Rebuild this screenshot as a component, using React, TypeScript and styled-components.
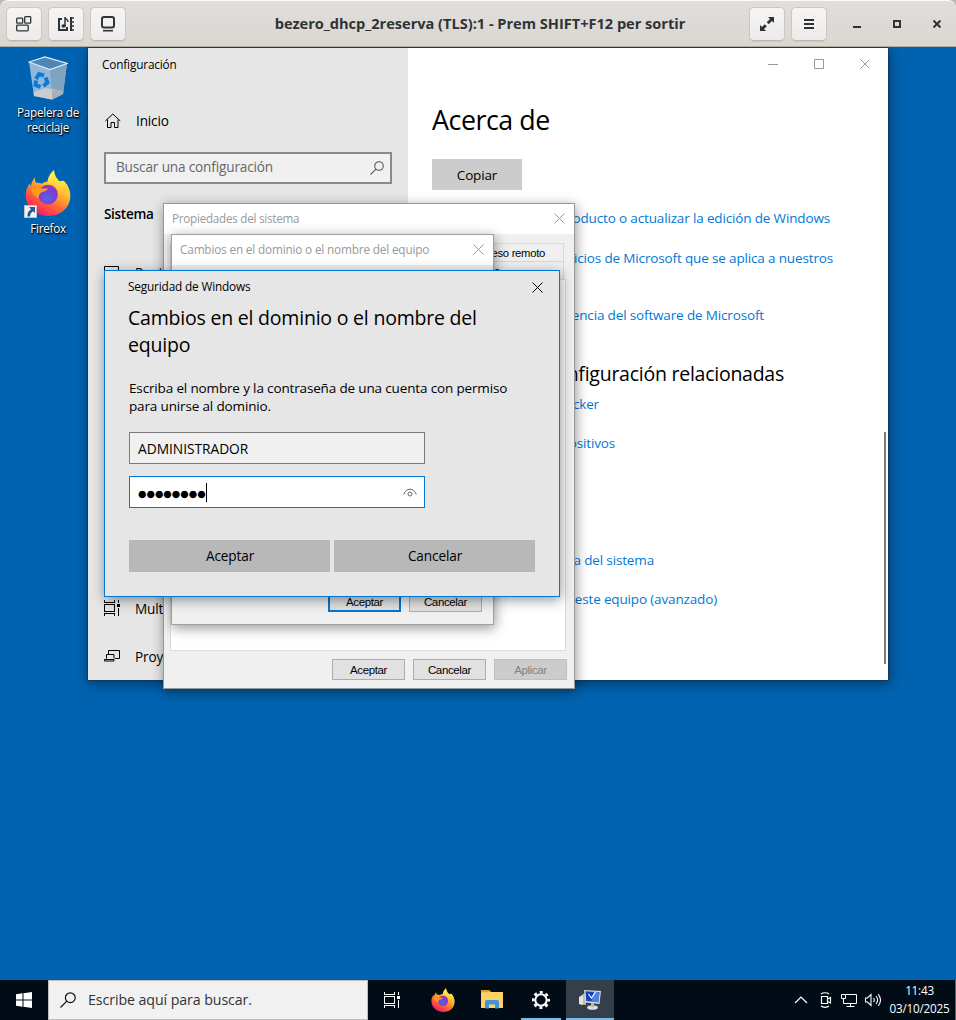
import React from "react";
import styled, { createGlobalStyle, css } from "styled-components";

const Global = createGlobalStyle`
  * { box-sizing: border-box; }
  body { margin: 0; background: #b9b9b9; font-family: "Open Sans", "Noto Sans", sans-serif; color: #000; overflow: hidden; }
`;

const Screen = styled.div`
  width: 956px;
  height: 1020px;
  display: flex;
  flex-direction: column;
  overflow: hidden;
`;

/* ---- text ---- */
const Label = styled.span<{ $size?: number; $track?: number; $color?: string; $bold?: boolean; $line?: number }>`
  font-size: ${(p) => p.$size ?? 13.6}px;
  letter-spacing: ${(p) => p.$track ?? -0.16}px;
  color: ${(p) => p.$color ?? "#000"};
  font-weight: ${(p) => (p.$bold ? 600 : 400)};
  line-height: ${(p) => p.$line ?? 20}px;
  white-space: nowrap;
`;

/* ---- viewer header ---- */
const Header = styled.header`
  height: 47px;
  flex: none;
  display: flex;
  align-items: center;
  justify-content: space-between;
  padding: 0 6px;
  border-radius: 8px 8px 0 0;
  border-top: 1px solid #fafafa;
  border-bottom: 1px solid #b3aca3;
  background: linear-gradient(#e1dedb, #dad6d2);
`;
const HeaderGroup = styled.div<{ $end?: boolean }>`
  width: 207px;
  display: flex;
  gap: 6px;
  align-items: center;
  justify-content: ${(p) => (p.$end ? "flex-end" : "flex-start")};
`;
const HeaderButton = styled.button`
  width: 36px;
  height: 34px;
  padding: 0;
  display: grid;
  place-items: center;
  border: 1px solid #cdc7c2;
  border-bottom-color: #bfb8b1;
  border-radius: 5px;
  background: linear-gradient(#f6f5f4, #edebe9);
  box-shadow: 0 1px 1px rgba(0, 0, 0, 0.07);
`;
const HeaderTitle = styled.h1`
  margin: 0;
  padding: 0 0 2px 4px;
  flex: 1;
  text-align: center;
  font-size: 14.6px;
  line-height: 20px;
  font-weight: 700;
  letter-spacing: -0.02px;
  color: #2e3436;
  white-space: nowrap;
`;
const WindowControl = styled.span`
  width: 40px;
  display: grid;
  place-items: center;
`;
const Controls = styled.div`
  display: flex;
  margin: 0 -7px 0 4px;
`;

/* ---- desktop ---- */
const Desktop = styled.main`
  position: relative;
  flex: 1;
  background: #0063b1;
  overflow: hidden;
`;
const Shortcuts = styled.div`
  width: 96px;
  display: flex;
  flex-direction: column;
`;
const Shortcut = styled.div<{ $top: number }>`
  padding-top: ${(p) => p.$top}px;
  display: flex;
  flex-direction: column;
  align-items: center;
  gap: 5px;
  text-align: center;
  font-size: 11.7px;
  line-height: 15px;
  letter-spacing: -0.25px;
  color: #fff;
  text-shadow: 1px 1px 2px #000, 0 1px 1px #000;
`;
const Win = styled.section<{ $x: number; $y: number; $w: number; $h: number; $edge: string }>`
  position: absolute;
  left: ${(p) => p.$x}px;
  top: ${(p) => p.$y}px;
  width: ${(p) => p.$w}px;
  height: ${(p) => p.$h}px;
  border: 1px solid ${(p) => p.$edge};
  background-clip: padding-box;
  box-shadow: 1px 3px 12px rgba(0, 0, 0, 0.42);
  overflow: hidden;
`;

const SettingsWin = styled(Win)`
  display: flex;
  background-color: #fff;
`;
const Sidebar = styled.aside`
  width: 320px;
  background: #e6e6e6;
  display: flex;
  flex-direction: column;
  > * { flex: none; }
`;
const SideTitle = styled.div`
  padding: 5px 14px 0;
  height: 57px;
  line-height: 20px;
`;
const NavRow = styled.div<{ $gap?: number; $drop?: boolean }>`
  height: 32px;
  margin-top: ${(p) => p.$gap ?? 0}px;
  margin-bottom: 16px;
  padding-left: 16px;
  display: flex;
  align-items: center;
  gap: 15px;
  svg { flex: none; }
  ${Label} { padding-top: ${(p) => (p.$drop ? 2 : 0)}px; }
`;
const SearchField = styled.div`
  height: 32px;
  margin: -1px 16px 0;
  padding: 0 6px 1px 10px;
  border: 2px solid #8a8a8a;
  background: #f0f0f0;
  display: flex;
  align-items: center;
  justify-content: space-between;
  ${Label} { padding-bottom: 2px; }
`;
const SectionName = styled.div`
  padding: 18px 16px 0;
  height: 73px;
`;
const Content = styled.div`
  flex: 1;
  position: relative;
  display: flex;
  flex-direction: column;
  align-items: flex-start;
  padding-left: 24px;
`;
const Caption = styled.div`
  align-self: stretch;
  height: 32px;
  display: flex;
  justify-content: flex-end;
  align-items: center;
  gap: 36px;
  padding-right: 18px;
`;
const PageTitle = styled.h2`
  margin: 21px 0 0;
  height: 58px;
  font-size: 26.8px;
  font-weight: 400;
  line-height: 38px;
  letter-spacing: -0.45px;
`;
const CopyButton = styled.button`
  width: 90px;
  height: 31px;
  padding: 1px 0 0;
  border: 0;
  background: #ccc;
  font: 13.5px/20px "Open Sans", sans-serif;
  letter-spacing: -0.16px;
`;
const LinkRow = styled.a<{ $w: number; $gap: number }>`
  width: ${(p) => p.$w}px;
  margin-top: ${(p) => p.$gap}px;
  display: flex;
  justify-content: flex-end;
  color: #0078d7;
  font-size: 13.5px;
  line-height: 20px;
  letter-spacing: -0.15px;
  white-space: nowrap;
`;
const RelatedTitle = styled.h3`
  margin: 35px 0 0;
  width: 352px;
  display: flex;
  justify-content: flex-end;
  font-size: 19.5px;
  letter-spacing: -0.25px;
  font-weight: 400;
  line-height: 28px;
  white-space: nowrap;
`;
const ScrollThumb = styled.div`
  position: absolute;
  right: 2px;
  top: 384px;
  width: 2px;
  height: 232px;
  background: #7a7a7a;
`;

/* ---- classic dialogs ---- */
const ClassicWin = styled(Win)`
  background-color: #f0f0f0;
  display: flex;
  flex-direction: column;
`;
const ClassicTitle = styled.div`
  flex: none;
  height: 30px;
  padding: 0 9px 2px 8px;
  background: #fff;
  display: flex;
  align-items: center;
  justify-content: space-between;
  ${Label} { padding-bottom: 1px; }
`;
const TabArea = styled.div`
  margin: 9px 10px 0 6px;
  display: flex;
  flex-direction: column;
`;
const TabRow = styled.div<{ $pad: number }>`
  height: 18px;
  padding-right: ${(p) => p.$pad}px;
  border: 1px solid #d9d9d9;
  border-bottom: 0;
  display: flex;
  justify-content: flex-end;
  align-items: center;
  font: 11.3px/14px "Liberation Sans", Arial, sans-serif;
  letter-spacing: -0.3px;
`;
const TabPage = styled.div`
  height: 372px;
  margin: 0 8px 0 6px;
  border: 1px solid #dcdcdc;
  background: #fff;
`;
const ButtonBar = styled.div<{ $pad: number; $pushed?: boolean }>`
  margin-top: ${(p) => (p.$pushed ? "auto" : "8px")};
  padding: 0 ${(p) => p.$pad}px ${(p) => (p.$pushed ? 12 : 0)}px;
  display: flex;
  justify-content: flex-end;
  gap: 8px;
`;
const ClassicButton = styled.button<{ $primary?: boolean; $off?: boolean }>`
  width: 73px;
  height: 21px;
  padding: 0;
  border: 1px solid #adadad;
  background: #e1e1e1;
  font: 11.5px/14px "Liberation Sans", Arial, sans-serif;
  letter-spacing: -0.35px;
  color: #000;
  ${(p) => p.$primary && css`border: 2px solid #0078d7;`}
  ${(p) => p.$off && css`background: #ccc; border-color: #bfbfbf; color: #838383;`}
`;

/* ---- credential dialog ---- */
const Credential = styled(Win)`
  background-color: #e6e6e6;
  padding: 6px 24px 0 23px;
  display: flex;
  flex-direction: column;
`;
const CredTitle = styled.div`
  display: flex;
  align-items: center;
  justify-content: space-between;
  height: 20px;
  margin-right: -8px;
  ${Label} { padding-bottom: 2px; }
`;
const CredHeading = styled.h2`
  margin: 7px 0 0;
  font-size: 19.5px;
  font-weight: 400;
  line-height: 27px;
  letter-spacing: -0.21px;
  white-space: pre-line;
`;
const CredText = styled.p`
  margin: 21px 0 0 1px;
  font-size: 13.5px;
  line-height: 18px;
  letter-spacing: -0.15px;
  white-space: pre-line;
`;
const Field = styled.div<{ $focus?: boolean }>`
  width: 296px;
  height: 32px;
  margin: ${(p) => (p.$focus ? 12 : 17)}px 0 0 1px;
  padding: 2px 7px 0 8px;
  border: 1px solid ${(p) => (p.$focus ? "#0078d7" : "#7a7a7a")};
  background: ${(p) => (p.$focus ? "#fff" : "#f0f0f0")};
  display: flex;
  align-items: center;
`;
const Dots = styled.span`
  padding-top: 2px;
  font: 9.7px/20px "DejaVu Sans", sans-serif;
`;
const Caret = styled.span`
  width: 1px;
  height: 19px;
  background: #000;
  margin: -1px auto 0 0;
`;
const CredButtons = styled.div`
  display: flex;
  gap: 4px;
  margin: 32px 0 0 1px;
`;
const CredButton = styled.button`
  width: 201px;
  height: 32px;
  padding: 0 0 0 1px;
  border: 0;
  background: #b8b8b8;
  font: 13.6px/20px "Open Sans", sans-serif;
  letter-spacing: -0.12px;
`;

/* ---- taskbar ---- */
const Taskbar = styled.footer`
  flex: none;
  height: 40px;
  display: flex;
  background: #010c17;
`;
const StartButton = styled.div`
  width: 48px;
  display: grid;
  place-items: center;
`;
const TaskSearch = styled.div`
  width: 320px;
  border: 1px solid #bdbdbd;
  background: #f1f1f1;
  display: flex;
  align-items: center;
  gap: 12px;
  padding: 0 0 0 11px;
`;
const TaskItem = styled.div<{ $w?: number; $active?: boolean; $line?: boolean }>`
  width: ${(p) => p.$w ?? 49}px;
  height: 40px;
  padding-top: 1px;
  display: flex;
  align-items: center;
  justify-content: center;
  background: ${(p) => (p.$active ? "#343f49" : "transparent")};
  border-bottom: 2px solid ${(p) => (p.$line ? "#76b9ed" : "transparent")};
  background-clip: padding-box;
`;
const Tray = styled.div`
  margin-left: auto;
  display: flex;
  align-items: center;
  border-right: 1px solid #59616a;
`;
const Clock = styled.div`
  width: 71px;
  margin-left: 2px;
  padding-bottom: 2px;
  display: flex;
  flex-direction: column;
  align-items: center;
`;

/* ---- drawings ---- */
const Cross = ({ size = 11, color = "#999", w = 1 }: { size?: number; color?: string; w?: number }) => (
  <svg width={size} height={size} viewBox={`0 0 ${size} ${size}`} stroke={color} strokeWidth={w}>
    <path d={`M.5 .5 ${size - 0.5} ${size - 0.5}M${size - 0.5} .5 .5 ${size - 0.5}`} />
  </svg>
);

const Magnifier = ({ size, color }: { size: number; color: string }) => (
  <svg width={size} height={size} viewBox="0 0 16 16" fill="none" stroke={color} strokeWidth="1.2">
    <circle cx="10.3" cy="5.7" r="4.9" />
    <path d="M6.8 9.2.5 15.5" />
  </svg>
);

const FirefoxIcon = ({ size, id }: { size: number; id: string }) => (
  <svg width={size} height={size} viewBox="0 0 46 46">
    <defs>
      <linearGradient id={id + "a"} x1=".85" y1=".1" x2=".25" y2=".95">
        <stop offset="0" stopColor="#fff44f" />
        <stop offset=".3" stopColor="#ffb52e" />
        <stop offset=".6" stopColor="#ff6a35" />
        <stop offset=".85" stopColor="#ff3750" />
        <stop offset="1" stopColor="#e31587" />
      </linearGradient>
      <radialGradient id={id + "b"} cx=".45" cy=".7" r=".7">
        <stop offset="0" stopColor="#5b63e8" />
        <stop offset=".6" stopColor="#7440d8" />
        <stop offset="1" stopColor="#a233b4" />
      </radialGradient>
      <linearGradient id={id + "c"} x1="0" y1="0" x2="0" y2="1">
        <stop offset="0" stopColor="#fff44f" />
        <stop offset=".55" stopColor="#ffd23a" />
        <stop offset="1" stopColor="#ff8a2d" />
      </linearGradient>
    </defs>
    <path d="M10 7.500c-.3 2.400.2 4 1.200 5.300 2-.3 4 0 5.800 1 3-3 8-3 11.500-1l9-2c5.500 4 8 9.500 7.800 15.500C45 38 35.500 46 23.200 46S.8 37 .8 25.500c0-5 1.500-9.500 4-12 .2 1 .5 1.800.9 2.400.8-3.400 2.200-6.200 4.300-8.400z" fill={`url(#${id}a)`} />
    <circle cx="23" cy="24.500" r="9.800" fill={`url(#${id}b)`} />
    <path d="M29 0c-4 3.500-6.500 8-6.500 12.500 4.500.5 8.500 2 10.500 5.500 2.500 5 1 11-3.500 14.500 7-1 11.500-6 11.500-12.500 1.200 1.500 2 3.500 2.200 5.500C45 19 42.500 14 38.500 10.500 37.800 12 37.500 13 37.600 14 33 10 29.500 6.500 29 0z" fill={`url(#${id}c)`} />
    <path d="M5.500 19c3-2.500 7.500-2.500 11-.5h6.300c-.2 2.500-4.500 3-6.300 3.800-1.700.8-3 3.700-3 5.700C9.500 26 6 23 5.500 19z" fill="#ff9a1f" />
  </svg>
);

const RecycleBin = () => (
  <svg width="40" height="44" viewBox="0 0 40 44">
    <path d="M1 6 6 40l18 3.500 11-5.500L39 7.500 20 13z" fill="#a3c0da" opacity=".9" />
    <path d="M22 13.500 39 7.500 35 38l-11 5.500z" fill="#7fa3c3" />
    <path d="M1 6 17 1l22 6.500L22 13.500z" fill="#4f86b5" stroke="#dcebf6" strokeWidth="1.300" />
    <path d="m5.500 36 12-4 17 3-.5 3.200L24 43.500 6 40z" fill="#c9cdd0" />
    <path d="M24 43.500 35 38l.4-3-11.400-3z" fill="#a8afb5" />
    <g fill="none" stroke="#0a7bdc" strokeWidth="4">
      <path d="m8 23 3-5 5 1.500M17.500 21.500l2 5-4 3.500M12.500 31l-5-2 .5-4.500" />
    </g>
  </svg>
);

const FirefoxShortcut = styled.div`
  position: relative;
  height: 46px;
`;
const ShortcutArrow = styled.svg`
  position: absolute;
  left: -1px;
  bottom: -2px;
`;

const TaskView = ({ color }: { color: string }) => (
  <svg width="16" height="16" viewBox="0 0 16 16" fill="none" stroke={color} shapeRendering="crispEdges">
    <path d="M.5 0v2.500h10V0M.5 16v-2.500h10V16M.5 4.500h10v7H.5zM14.500 0v3M14.500 8v8" />
    <path d="M13 4h3v3h-3z" fill={color} stroke="none" />
  </svg>
);

export default function App() {
  return (
    <Screen>
      <Global />
      <Header>
        <HeaderGroup>
          <HeaderButton>
            <svg width="16" height="16" viewBox="0 0 16 16" fill="none" stroke="#2e3436" strokeWidth="1.300">
              <rect x=".7" y="2.200" width="6" height="5" rx=".8" />
              <rect x="8.700" y=".7" width="6" height="6.500" rx=".8" />
              <rect x=".7" y="9.200" width="11.500" height="5.600" rx=".8" />
            </svg>
          </HeaderButton>
          <HeaderButton>
            <svg width="18" height="16" viewBox="0 0 18 16" fill="none" stroke="#2e3436" strokeWidth="2">
              <path d="M5 3H2v11h8v-3" />
              <path d="M8 1v9M8 1.500c1 2 3 2 3 4.500" strokeWidth="1.500" />
              <ellipse cx="6.600" cy="10" rx="2.200" ry="1.800" fill="#2e3436" stroke="none" />
              <path d="M14 1v14" />
              <path d="M14 2h3M14 6h3M14 10h3M14 14h3" strokeWidth="1.500" />
            </svg>
          </HeaderButton>
          <HeaderButton>
            <svg width="16" height="16" viewBox="0 0 16 16" fill="none" stroke="#2e3436" strokeWidth="2">
              <rect x="2" y="1" width="12" height="10.500" rx="2" />
              <path d="M3 14.700h10" strokeWidth="1.600" />
            </svg>
          </HeaderButton>
        </HeaderGroup>
        <HeaderTitle>bezero_dhcp_2reserva (TLS):1 - Prem SHIFT+F12 per sortir</HeaderTitle>
        <HeaderGroup $end>
          <HeaderButton>
            <svg width="14" height="14" viewBox="0 0 14 14" fill="#2e3436">
              <path d="M8 0h6v6l-2-2-3.300 3.300L6.700 5.300 10 2zM6 14H0V8l2 2 2.800-2.800 2 2L4 12z" />
            </svg>
          </HeaderButton>
          <HeaderButton>
            <svg width="12" height="12" viewBox="0 0 12 12" fill="#2e3436" shapeRendering="crispEdges">
              <path d="M1 1h10v2H1zM1 5h10v2H1zM1 9h10v2H1z" />
            </svg>
          </HeaderButton>
          <Controls>
            <WindowControl>
              <svg width="8" height="10" viewBox="0 0 8 10"><path d="M0 7h8v2H0z" fill="#2e3436" /></svg>
            </WindowControl>
            <WindowControl>
              <svg width="8" height="8" viewBox="0 0 8 8"><path d="M1 1h6v6H1z" fill="none" stroke="#2e3436" strokeWidth="2" /></svg>
            </WindowControl>
            <WindowControl>
              <Cross size={8} color="#2e3436" w={2} />
            </WindowControl>
          </Controls>
        </HeaderGroup>
      </Header>

      <Desktop>
        <Shortcuts>
          <Shortcut $top={9}>
            <RecycleBin />
            <span>Papelera de<br />reciclaje</span>
          </Shortcut>
          <Shortcut $top={35}>
            <FirefoxShortcut>
              <FirefoxIcon size={46} id="desk" />
              <ShortcutArrow width="13" height="13" viewBox="0 0 13 13">
                <path d="M.5.5h12v12H.5z" fill="#f4f4f4" stroke="#c4c4c4" />
                <path d="M5 2h6v6L9 6.200C7 7.500 6.300 9 6 11.500H3.500C3 8.500 4.500 5.800 7 4.200z" fill="#2b5797" />
              </ShortcutArrow>
            </FirefoxShortcut>
            <span>Firefox</span>
          </Shortcut>
        </Shortcuts>

        <SettingsWin $x={87} $y={0} $w={802} $h={634} $edge="rgba(20,50,80,.65)">
          <Sidebar>
            <SideTitle><Label $size={11.8}>Configuración</Label></SideTitle>
            <NavRow>
              <svg width="17" height="16" viewBox="0 0 17 16" fill="none" stroke="#000">
                <path d="M1.300 8 8.800 1l7.500 7M3.500 6.500v8h3.500v-5h3.500v5H14v-8" />
              </svg>
              <Label>Inicio</Label>
            </NavRow>
            <SearchField>
              <Label $color="#666">Buscar una configuración</Label>
              <Magnifier size={14} color="#555" />
            </SearchField>
            <SectionName><Label $bold $size={13.5} $track={-0.3}>Sistema</Label></SectionName>
            <NavRow>
              <svg width="16" height="16" viewBox="0 0 16 16" fill="none" stroke="#000">
                <path d="M.5 1.500h14v10H.5zM4 14.500h7" />
              </svg>
              <Label>Pantalla</Label>
            </NavRow>
            <NavRow $gap={287} $drop>
              <TaskView color="#000" />
              <Label>Multitarea</Label>
            </NavRow>
            <NavRow $drop>
              <svg width="16" height="16" viewBox="0 0 16 16" fill="none" stroke="#000">
                <path d="M4.500 6V2.500h11v8H11M2.500 10.500v-4H10v4M.5 11.500h9.500v1.500H.5z" />
              </svg>
              <Label>Proyectar</Label>
            </NavRow>
          </Sidebar>
          <Content>
            <Caption>
              <svg width="10" height="10"><path d="M0 5.500h10" stroke="#999" /></svg>
              <svg width="10" height="10"><path d="M.5.500h9v9h-9z" fill="none" stroke="#999" /></svg>
              <Cross size={10} />
            </Caption>
            <PageTitle>Acerca de</PageTitle>
            <CopyButton>Copiar</CopyButton>
            <LinkRow $w={398} $gap={18}>Cambiar la clave de producto o actualizar la edición de Windows</LinkRow>
            <LinkRow $w={401} $gap={20}>Lea el Contrato de servicios de Microsoft que se aplica a nuestros</LinkRow>
            <LinkRow $w={332} $gap={37}>Lea los Términos de licencia del software de Microsoft</LinkRow>
            <RelatedTitle>Opciones de configuración relacionadas</RelatedTitle>
            <LinkRow $w={167} $gap={6}>Configuración de BitLocker</LinkRow>
            <LinkRow $w={183} $gap={19}>Administrador de dispositivos</LinkRow>
            <LinkRow $w={222} $gap={97}>Configuración avanzada del sistema</LinkRow>
            <LinkRow $w={285} $gap={19}>Cambiar el nombre de este equipo (avanzado)</LinkRow>
            <ScrollThumb />
          </Content>
        </SettingsWin>

        <ClassicWin $x={163} $y={156} $w={412} $h={486} $edge="#989898">
          <ClassicTitle>
            <Label $size={11.7} $track={-0.26} $color="#999">Propiedades del sistema</Label>
            <Cross />
          </ClassicTitle>
          <TabArea>
            <TabRow $pad={18}>Acceso remoto</TabRow>
            <TabRow $pad={63}>Hardware</TabRow>
          </TabArea>
          <TabPage />
          <ButtonBar $pad={7}>
            <ClassicButton>Aceptar</ClassicButton>
            <ClassicButton>Cancelar</ClassicButton>
            <ClassicButton $off>Aplicar</ClassicButton>
          </ButtonBar>
        </ClassicWin>

        <ClassicWin $x={171} $y={187} $w={323} $h={391} $edge="#a0a0a0">
          <ClassicTitle>
            <Label $size={11.8} $track={-0.18} $color="#999">Cambios en el dominio o el nombre del equipo</Label>
            <Cross />
          </ClassicTitle>
          <ButtonBar $pad={11} $pushed>
            <ClassicButton $primary>Aceptar</ClassicButton>
            <ClassicButton>Cancelar</ClassicButton>
          </ButtonBar>
        </ClassicWin>

        <Credential $x={104} $y={223} $w={456} $h={327} $edge="#0078d7">
          <CredTitle>
            <Label $size={11.8}>Seguridad de Windows</Label>
            <Cross color="#000" />
          </CredTitle>
          <CredHeading>{"Cambios en el dominio o el nombre del\nequipo"}</CredHeading>
          <CredText>{"Escriba el nombre y la contraseña de una cuenta con permiso\npara unirse al dominio."}</CredText>
          <Field><Label $size={13.8} $track={-0.05}>ADMINISTRADOR</Label></Field>
          <Field $focus>
            <Dots>●●●●●●●●</Dots>
            <Caret />
            <svg width="14" height="10" viewBox="0 0 14 10" fill="none" stroke="#666">
              <path d="M.7 6.500C2 3 4.300 1.200 7 1.200S12 3 13.300 6.500" />
              <circle cx="7" cy="6" r="2" />
            </svg>
          </Field>
          <CredButtons>
            <CredButton>Aceptar</CredButton>
            <CredButton>Cancelar</CredButton>
          </CredButtons>
        </Credential>
      </Desktop>

      <Taskbar>
        <StartButton>
          <svg width="16" height="16" viewBox="0 0 16 16" fill="#fff">
            <path d="M0 2.200 6.500 1.300v6.200H0zM7.500 1.200 16 0v7.500H7.500zM0 8.500h6.500v6.200L0 13.800zM7.500 8.500H16V16l-8.500-1.200z" />
          </svg>
        </StartButton>
        <TaskSearch>
          <Magnifier size={16} color="#111" />
          <Label $size={14.2} $track={-0.08} $color="#333">Escribe aquí para buscar.</Label>
        </TaskSearch>
        <TaskItem $w={48}><TaskView color="#fff" /></TaskItem>
        <TaskItem $w={53}><FirefoxIcon size={24} id="bar" /></TaskItem>
        <TaskItem $w={45}>
          <svg width="22" height="19" viewBox="0 0 22 19">
            <path d="M0 0h8l2 2h12v16H0z" fill="#ffd268" />
            <path d="M0 0h8l1.500 2.300H0z" fill="#e0a51d" />
            <path d="M4 18.500v-6.500c0-1.500.8-2 2-2h10c1.200 0 2 .5 2 2v6.500h-4v-4H8v4z" fill="#3f95d8" />
          </svg>
        </TaskItem>
        <TaskItem $w={7} />
        <TaskItem $w={40} $line>
          <svg width="20" height="20" viewBox="0 0 20 20" fill="none" stroke="#fff">
            <circle cx="10" cy="10" r="5.700" strokeWidth="2" />
            <circle cx="10" cy="10" r="7.700" strokeWidth="2.600" strokeDasharray="3.024 3.024" strokeDashoffset="1.512" />
          </svg>
        </TaskItem>
        <TaskItem $w={5} />
        <TaskItem $w={48} $active $line>
          <svg width="24" height="22" viewBox="0 0 24 22">
            <path d="M1 8 8 3v13l-7-1z" fill="#b9beb4" />
            <path d="m1 8 4-1v9l-4-1z" fill="#e3e5df" />
            <path d="m6 1 17 1-1.500 13-14-1.500z" fill="#d6d9dc" />
            <path d="m7.500 2.300 14 1-1.200 10-12-1.200z" fill="#173fc4" />
            <path d="m16 2.800 5.500.5-1.200 10-7-.7z" fill="#4f7fe6" />
            <path d="m10.500 5 3 4 4-6" fill="none" stroke="#fff" strokeWidth="1.200" />
            <ellipse cx="14.500" cy="18.500" rx="5.500" ry="2.300" fill="#d9dbdc" />
            <path d="M13 14h3v4h-3z" fill="#b4b8bb" />
          </svg>
        </TaskItem>
        <Tray>
          <svg width="90" height="20" viewBox="0 0 90 20" fill="none" stroke="#fff" strokeWidth="1.200">
            <path d="M3 13 9 7l6 6" />
            <path d="M29.500 6.500h6v7h-6zM35.500 9l3-1.500v5.500l-3-1.500M29 4c2-1.700 6-1.700 8 0M29 16c2 1.700 6 1.700 8 0" />
            <path d="M54 4.500h10.500v9H51.500V9M49.500 4.500h4v4h-4zM58.500 13.500v3M54.500 16.500h8" strokeWidth="1" />
            <path d="M73.500 8h2l3.500-3.500v11L75.500 12h-2zM81.500 8c1 1.300 1 2.700 0 4M84 6c2 2.500 2 5.500 0 8M86.300 4.300c2.700 3.500 2.700 8 0 11.500" strokeWidth="1.100" />
          </svg>
          <Clock>
            <Label $size={11.7} $track={-0.22} $color="#fff" $line={18}>11:43</Label>
            <Label $size={11.7} $track={-0.22} $color="#fff" $line={18}>03/10/2025</Label>
          </Clock>
        </Tray>
      </Taskbar>
    </Screen>
  );
}
